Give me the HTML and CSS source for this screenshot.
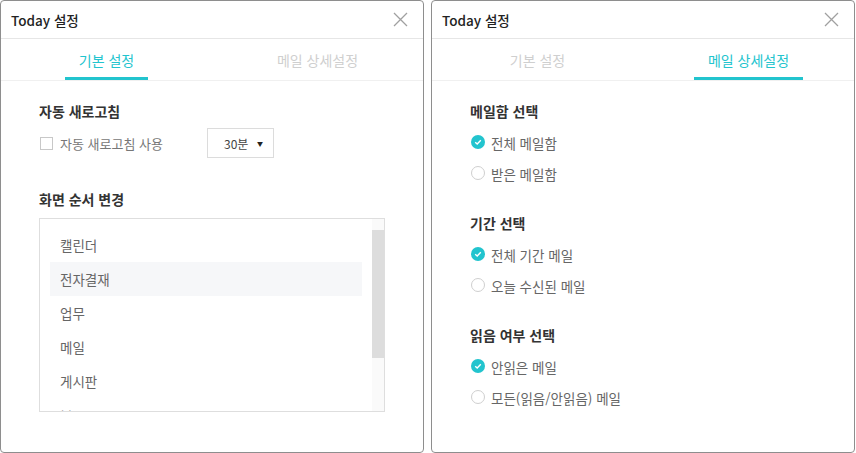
FILE: index.html
```html
<!DOCTYPE html>
<html lang="ko">
<head>
    <meta charset="UTF-8">
    <meta name="viewport" content="width=device-width, initial-scale=1">
    <title>Today 설정</title>
    <link rel="stylesheet" href="styles.css">
</head>
<body>
    <!-- 기본 설정 -->
    <div class="panel">
        <div class="panel-header">
            <span class="panel-title">Today 설정</span>
            <button class="close-btn" aria-label="닫기">
                <svg width="15" height="15" viewBox="0 0 15 15"><path d="M1 1 L14 14 M14 1 L1 14" stroke="#a0a0a0" stroke-width="1.3" fill="none"/></svg>
            </button>
        </div>
        <div class="tabs">
            <div class="tab-cell"><span class="tab active">기본 설정</span></div>
            <div class="tab-cell"><span class="tab">메일 상세설정</span></div>
        </div>
        <div class="panel-body">
            <h3 class="section-title">자동 새로고침</h3>
            <div class="refresh-row">
                <label class="check">
                    <span class="checkbox"></span>
                    자동 새로고침 사용
                </label>
                <div class="select-box">
                    <span>30분</span>
                    <span class="arrow">▼</span>
                </div>
            </div>

            <h3 class="section-title order-title">화면 순서 변경</h3>
            <div class="order-list">
                <div class="order-items">
                    <div class="order-item">캘린더</div>
                    <div class="order-item selected">전자결재</div>
                    <div class="order-item">업무</div>
                    <div class="order-item">메일</div>
                    <div class="order-item">게시판</div>
                    <div class="order-item">보고</div>
                </div>
                <div class="scrollbar">
                    <div class="scroll-thumb"></div>
                </div>
            </div>
        </div>
    </div>

    <!-- 메일 상세설정 -->
    <div class="panel">
        <div class="panel-header">
            <span class="panel-title">Today 설정</span>
            <button class="close-btn" aria-label="닫기">
                <svg width="15" height="15" viewBox="0 0 15 15"><path d="M1 1 L14 14 M14 1 L1 14" stroke="#a0a0a0" stroke-width="1.3" fill="none"/></svg>
            </button>
        </div>
        <div class="tabs">
            <div class="tab-cell"><span class="tab">기본 설정</span></div>
            <div class="tab-cell"><span class="tab active">메일 상세설정</span></div>
        </div>
        <div class="panel-body mail-body">
            <div class="group">
                <h3 class="section-title">메일함 선택</h3>
                <div class="option"><span class="radio on"></span>전체 메일함</div>
                <div class="option"><span class="radio"></span>받은 메일함</div>
            </div>
            <div class="group">
                <h3 class="section-title">기간 선택</h3>
                <div class="option"><span class="radio on"></span>전체 기간 메일</div>
                <div class="option"><span class="radio"></span>오늘 수신된 메일</div>
            </div>
            <div class="group">
                <h3 class="section-title">읽음 여부 선택</h3>
                <div class="option"><span class="radio on"></span>안읽은 메일</div>
                <div class="option"><span class="radio"></span>모든(읽음/안읽음) 메일</div>
            </div>
        </div>
    </div>
</body>
</html>
```

FILE: styles.css
```css
body {
    margin: 0;
    display: flex;
    gap: 7px;
    background-color: #fff;
    font-family: "Noto Sans CJK KR", "Noto Sans", sans-serif;
    color: #333;
}

.panel {
    width: 424px;
    height: 453px;
    box-sizing: border-box;
    border: 1px solid #8e8e8e;
    border-radius: 4px;
    background: #fff;
    display: flex;
    flex-direction: column;
}

.panel-header {
    height: 37px;
    border-bottom: 1px solid #e6e6e6;
    display: flex;
    align-items: center;
    justify-content: space-between;
    padding: 0 15px 0 10px;
}

.panel-title {
    font-size: 13.5px;
    font-weight: 500;
    color: #222;
}

.close-btn {
    border: none;
    background: none;
    padding: 0;
    width: 15px;
    height: 15px;
    cursor: pointer;
    display: flex;
}

.tabs {
    display: grid;
    grid-template-columns: 1fr 1fr;
    border-bottom: 1px solid #f0f0f0;
    height: 41px;
}

.tab-cell {
    text-align: center;
}

.tab {
    display: inline-block;
    box-sizing: border-box;
    height: 41px;
    padding: 4px 14px 0;
    line-height: 34px;
    font-size: 14px;
    color: #cfcfcf;
    border-bottom: 3px solid transparent;
}

.tab.active {
    color: #22c4ce;
    border-bottom-color: #22c4ce;
}

.panel-body {
    padding: 20px 38px 0;
}

.section-title {
    margin: 0;
    font-size: 14px;
    font-weight: bold;
    line-height: 20px;
    color: #333;
}

/* 자동 새로고침 */
.refresh-row {
    display: flex;
    align-items: center;
    gap: 44px;
    margin-top: 7px;
    height: 30px;
}

.check {
    display: flex;
    align-items: center;
    gap: 7px;
    font-size: 13px;
    color: #777;
    padding-left: 1px;
}

.checkbox {
    width: 13px;
    height: 13px;
    box-sizing: border-box;
    border: 1px solid #c8c8c8;
    background: #fff;
}

.select-box {
    width: 67px;
    height: 30px;
    box-sizing: border-box;
    border: 1px solid #dcdcdc;
    display: flex;
    align-items: center;
    padding: 0 10px 0 16px;
    justify-content: space-between;
    font-size: 12px;
    color: #444;
}

.select-box .arrow {
    font-size: 6px;
    color: #222;
}

/* 화면 순서 변경 */
.order-title {
    margin-top: 31px;
}

.order-list {
    margin-top: 9px;
    height: 194px;
    box-sizing: border-box;
    border: 1px solid #dedede;
    display: flex;
}

.order-items {
    flex: 1;
    overflow: hidden;
    padding: 9px 10px 0 10px;
}

.order-item {
    height: 34px;
    line-height: 34px;
    padding-left: 10px;
    font-size: 13.5px;
    color: #666;
}

.order-item.selected {
    background: #f6f7f9;
}

.scrollbar {
    width: 12px;
    background: #fafafa;
    padding-top: 11px;
}

.scroll-thumb {
    height: 128px;
    background: #dddddd;
}

/* 메일 상세설정 */
.group {
    margin-bottom: 24px;
}

.group .section-title {
    margin-bottom: 6px;
}

.option {
    display: flex;
    align-items: center;
    gap: 6px;
    height: 31px;
    font-size: 13.5px;
    color: #666;
}

.radio {
    width: 14px;
    height: 14px;
    box-sizing: border-box;
    border-radius: 50%;
    border: 1px solid #cfcfcf;
    background: #fff;
    margin-left: 1px;
    margin-top: -2px;
}

.radio.on {
    border: none;
    background: #22c4ce url("data:image/svg+xml,%3Csvg xmlns='http://www.w3.org/2000/svg' width='14' height='14'%3E%3Cpath d='M4.2 7.2 L6.2 9 L9.8 5.2' stroke='white' stroke-width='1.4' fill='none'/%3E%3C/svg%3E") no-repeat center;
}
```
